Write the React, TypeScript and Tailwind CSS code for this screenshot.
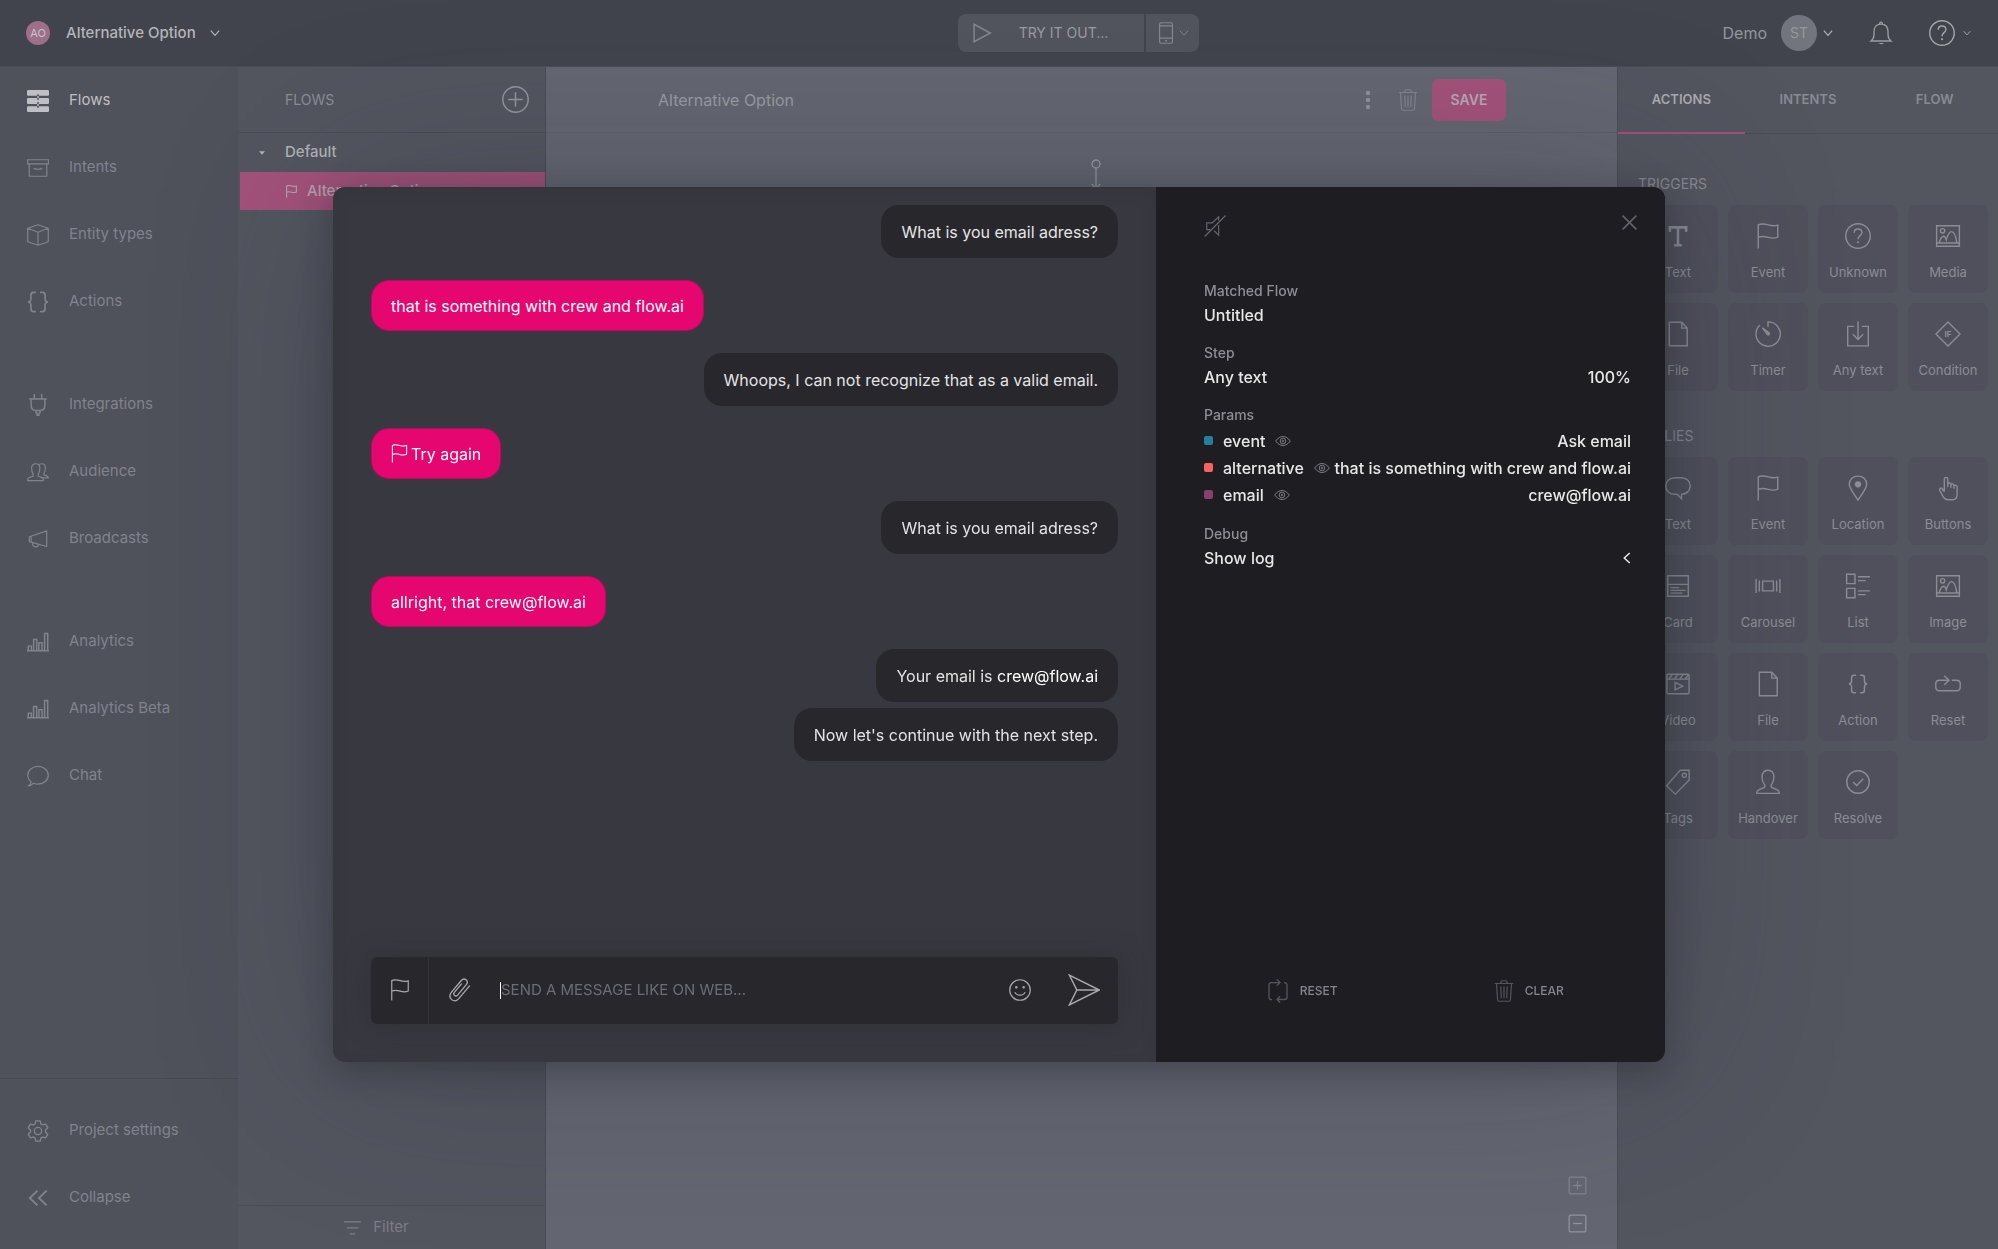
import type { ReactNode } from "react";

type IconProps = { className?: string; w?: number };

function Svg({ className = "size-6", w = 1.3, children }: IconProps & { children: ReactNode }) {
  return (
    <svg viewBox="0 0 24 24" className={`shrink-0 ${className}`} fill="none" stroke="currentColor" strokeWidth={w} aria-hidden="true">
      {children}
    </svg>
  );
}

const FlowsIcon = (p: IconProps) => (
  <Svg {...p}>
    <g fill="currentColor" stroke="none">
      <rect x="0" y="0" width="24" height="6.4" rx="1.4" />
      <rect x="0" y="8.8" width="24" height="6.4" rx="1.4" />
      <rect x="0" y="17.6" width="24" height="6.4" rx="1.4" />
      <rect x="11.2" y="5" width="1.6" height="15" />
    </g>
    <g fill="#50525c" stroke="none">
      <circle cx="12" cy="5.6" r="1.1" />
      <circle cx="12" cy="9.8" r="1.1" />
      <circle cx="12" cy="14.2" r="1.1" />
      <circle cx="12" cy="18.4" r="1.1" />
    </g>
  </Svg>
);
const ArchiveIcon = (p: IconProps) => (
  <Svg {...p}>
    <path d="M.7 3h22.6v4.6H.7zM2.4 7.6V21h19.2V7.6M7.6 12c.4 1.8 8.400 1.800 8.800 0" />
  </Svg>
);
const CubeIcon = (p: IconProps) => (
  <Svg {...p}>
    <path d="M12 .8 23.200 4.600v14.800L12 23.200.8 19.400V4.600zM.8 4.600 12 9l11.200-4.400M12 9v14.200" strokeLinejoin="round" />
  </Svg>
);
const BracesIcon = (p: IconProps) => (
  <Svg {...p} w={1.8}>
    <path d="M9 1.500H7.200C5.400 1.500 4.300 2.600 4.300 4.400v3.800C4.300 10.500 3.300 12 1 12c2.300 0 3.300 1.500 3.300 3.800v3.800c0 1.800 1.100 2.900 2.900 2.900H9M15 1.500h1.800c1.800 0 2.900 1.100 2.900 2.900v3.800c0 2.300 1 3.800 3.300 3.800-2.300 0-3.300 1.500-3.300 3.800v3.800c0 1.800-1.100 2.900-2.900 2.900H15" strokeLinecap="round" />
  </Svg>
);
const ActionTileIcon = ({ className }: IconProps) => (
  <span className={`grid place-items-center ${className}`}>
    <BracesIcon className="size-5" />
  </span>
);
const PlugIcon = (p: IconProps) => (
  <Svg {...p} w={1.6}>
    <path d="M8 0v5.500M16 0v5.500M2.500 5.500h19M4.500 5.500V12c0 3.500 2 6 5.200 6h4.600c3.200 0 5.200-2.500 5.200-6V5.500M9.700 18v2.200l1.300 1v2h2v-2l1.300-1V18" />
  </Svg>
);
const AudienceIcon = (p: IconProps) => (
  <Svg {...p}>
    <path d="M.7 21.500h17v-1.300c0-2-1.400-2.400-5.400-3.700v-2.400c1.400-1.700 1.700-4 1.700-6.500 0-3-1.800-4.600-4.500-4.600S5 4.600 5 7.600c0 2.500.3 4.800 1.700 6.500v2.400c-4 1.300-6 1.700-6 3.700zM12.800 4.400c.8-.9 2-1.400 3.300-1.400 2.500 0 4 1.600 4 4.300 0 2.200-.4 4.200-1.600 5.800v2c3.600 1 4.800 1.600 4.800 3.400h-5.800" />
  </Svg>
);
const HornIcon = (p: IconProps) => (
  <Svg {...p}>
    <path d="M2.500 9.500 21.500 3.200v17L2.500 14.800zM6 16.300c0 5.500 6 5.500 6.500 1.500M4.500 9v6" strokeLinejoin="round" />
  </Svg>
);
const ChartIcon = (p: IconProps) => (
  <Svg {...p} w={1.6}>
    <path d="M0 21.500h24M1.400 21.500v-5h3.400v5M7.200 21.500V9.300h3.400v12.200M13 21.500v-8.700h3.400v8.700M19.200 21.500V2.800h3.400v18.700" />
  </Svg>
);
const ChatIcon = (p: IconProps) => (
  <Svg {...p}>
    <path d="M4.600 18.300C2.200 16.500.8 14 .8 11.200.8 5.800 5.800 1.500 12 1.500s11.200 4.300 11.200 9.700S18.200 20.900 12 20.900c-1.800 0-3.500-.4-5-1-1.500 1.600-3.300 2.600-5.600 2.900 1.800-1.200 2.900-2.700 3.200-4.500z" strokeLinejoin="round" />
  </Svg>
);
const GearIcon = (p: IconProps) => (
  <Svg {...p} w={1.5}>
    <circle cx="12" cy="12" r="4" />
    <path d="M9.600 1h4.800l.7 3.300 1.900 1.100 3.300-1 2.400 4.100-2.500 2.300v2.400l2.500 2.300-2.400 4.100-3.300-1-1.900 1.100-.7 3.300H9.600l-.7-3.300L7 18.600l-3.300 1-2.400-4.100 2.500-2.300v-2.400L1.300 8.500l2.400-4.100 3.300 1 1.900-1.100z" strokeLinejoin="round" />
  </Svg>
);
const CollapseIcon = (p: IconProps) => (
  <Svg {...p} w={2}>
    <path d="m11.500 4-8.500 8 8.500 8M21.500 4 13 12l8.500 8" />
  </Svg>
);
const PlusCircle = (p: IconProps) => (
  <Svg {...p}>
    <circle cx="12" cy="12" r="11.300" />
    <path d="M12 5.500v13M5.500 12h13" />
  </Svg>
);
const Chevron = (p: IconProps) => (
  <Svg {...p}>
    <path d="m2 6.500 10 11 10-11" />
  </Svg>
);
const FlagIcon = (p: IconProps) => (
  <Svg {...p}>
    <path d="M3 23.500V1.800c3-1.600 6-1 9.300 0s5.700 1.200 8.700.2v11c-3 1.400-5.700 1.200-8.700.3s-6.300-1.500-9.300 0" />
  </Svg>
);
const FilterIcon = (p: IconProps) => (
  <Svg {...p}>
    <path d="M0 4h24M4 12.500h16M8 21h8" />
  </Svg>
);
const PlayIcon = (p: IconProps) => (
  <Svg {...p}>
    <path d="M2.500 1.500v21L22 12z" />
  </Svg>
);
const PhoneIcon = (p: IconProps) => (
  <Svg {...p}>
    <rect x="5" y=".8" width="14" height="22.400" rx="1.800" />
    <path d="M5 4.200h14M5 17.600h14" />
    <rect x="11" y="19.600" width="2" height="1.800" fill="currentColor" stroke="none" />
  </Svg>
);
const DotsIcon = (p: IconProps) => (
  <Svg {...p}>
    <g fill="currentColor" stroke="none">
      <circle cx="12" cy="3.500" r="2.700" />
      <circle cx="12" cy="12" r="2.700" />
      <circle cx="12" cy="20.500" r="2.700" />
    </g>
  </Svg>
);
const TrashIcon = (p: IconProps) => (
  <Svg {...p}>
    <path d="M2 3.800h20M8.500 3.800C8.500 1.800 9 .8 10.200.8h3.600c1.200 0 1.700 1 1.700 3M3.800 3.800l1.200 18c.1.900.6 1.400 1.500 1.400h11c.9 0 1.400-.5 1.500-1.400l1.200-18M8.500 7l.5 13M12 7v13M15.500 7l-.5 13" />
  </Svg>
);
const BellIcon = (p: IconProps) => (
  <Svg {...p}>
    <path d="M2 20h20c-2.300-1.800-3-3.200-3-6.500v-3C19 6 16.500 3.200 12 3.200S5 6 5 10.500v3c0 3.300-.7 4.700-3 6.500zM10.600 3.200c-.4-2.800 3.200-2.800 2.800 0" />
    <path d="M9.300 22h5.400c-.5 1.600-4.900 1.600-5.400 0z" fill="currentColor" stroke="none" />
  </Svg>
);
const HelpIcon = (p: IconProps) => (
  <Svg {...p}>
    <circle cx="12" cy="12" r="11.300" />
    <path d="M8.500 9C8.500 6.800 9.900 5.500 12 5.500s3.600 1.300 3.600 3.300c0 2.800-3.600 3-3.600 6.200" />
    <circle cx="12" cy="17.800" r="1" fill="currentColor" stroke="none" />
  </Svg>
);
const TextIcon = (p: IconProps) => (
  <Svg {...p}>
    <path d="M4.500 8V4h15v4M12 4v16.500M8.500 20.500h7" strokeWidth="2.400" />
  </Svg>
);
const ImageIcon = (p: IconProps) => (
  <Svg {...p}>
    <path d="M1.500 2.500h21v19h-21zM1.500 18.400h21M3.800 18.400c1-3.400 2.700-6.200 4.200-6.200s1.800 1.600 2.400 3.400c1.300-4.400 2.700-7.600 4.800-7.600 2.400 0 4.200 5.200 5 10.400" />
    <circle cx="7" cy="7.200" r="2" />
  </Svg>
);
const FileIcon = (p: IconProps) => (
  <Svg {...p}>
    <path d="M4 1.200h11.500l5 5.400v16.200H4zM15.500 1.200v5.400h5" />
  </Svg>
);
const TimerIcon = (p: IconProps) => (
  <Svg {...p}>
    <path d="M12 5.500V.8A11.200 11.200 0 1 1 4.600 3.700" />
    <path d="M6.800 6.300 13 10.800c1 1.200-.4 2.700-1.600 1.700z" fill="currentColor" />
  </Svg>
);
const AnyTextIcon = (p: IconProps) => (
  <Svg {...p}>
    <path d="M8.500 5h-6v18h19V5h-6M12 .5v16M7.300 12.200 12 17l4.700-4.800" />
  </Svg>
);
const ConditionIcon = () => (
  <span className="relative grid size-[26px] place-items-center">
    <Svg className="absolute inset-0 size-[26px]">
      <path d="M12 .9 23.100 12 12 23.100.9 12z" />
    </Svg>
    <span className="text-[8px] leading-none font-bold">IF</span>
  </span>
);
const BubbleIcon = (p: IconProps) => (
  <Svg {...p}>
    <path d="M9 2.500h6c4.800 0 8.300 3.300 8.300 7.700 0 4.300-3.300 7.500-8 7.600v4.200l-4-4.200H9C4.200 17.800.7 14.500.7 10.200S4.200 2.500 9 2.500z" />
  </Svg>
);
const PinIcon = (p: IconProps) => (
  <Svg {...p}>
    <path d="M12 23.200C8 17 4 12.600 4 8.600 4 4 7.600 1 12 1s8 3 8 7.600c0 4-4 8.400-8 14.600z" />
    <circle cx="12" cy="8.600" r="2.900" fill="currentColor" stroke="none" />
  </Svg>
);
const HandIcon = (p: IconProps) => (
  <Svg {...p}>
    <path d="M8.600 15V3.800c0-2.200 3.200-2.200 3.200 0V11M11.800 8.600c0-1.700 2.900-1.700 2.900.2v3M14.700 9.400c0-1.700 2.800-1.500 2.800.3v3M17.500 10.600c0-1.600 2.900-1.500 2.900.4v7c0 2.800-1.400 4.800-4.200 4.800H12c-2.400 0-3.600-1-4.600-3l-3-5.600c-.9-1.800 1.200-2.900 2.400-1.300L8.600 15.500" />
  </Svg>
);
const CardIcon = (p: IconProps) => (
  <Svg {...p}>
    <path d="M2.500 2.500h19v19h-19zM2.500 10.500h19M5 13.500h8M5 16h14M5 18.600h11" />
  </Svg>
);
const CarouselIcon = (p: IconProps) => (
  <Svg {...p}>
    <path d="M7 7.500h10v9H7zM1 5.500v13M4 7v10M23 5.500v13M20 7v10" />
  </Svg>
);
const ListIcon = (p: IconProps) => (
  <Svg {...p}>
    <path d="M1.500 1.200h7.700v8.600H1.500zM1.500 14.200h7.700v8.600H1.500zM12 3.500h11M12 7h7M12 16.500h11M12 20h7" />
  </Svg>
);
const VideoIcon = (p: IconProps) => (
  <Svg {...p}>
    <rect x="1.800" y="3" width="20.400" height="18" rx="1" />
    <path d="M1.800 7.500h20.400M3.500 7.500 7 3M8.500 7.500 12 3M13.500 7.500 17 3M18.500 7.500 22 3M9.300 10.500v7l7-3.500z" />
  </Svg>
);
const ResetTileIcon = (p: IconProps) => (
  <Svg {...p}>
    <path d="M15.500 8.500h4.300c2.200 0 3.500 1.200 3.500 3.300v3c0 2.200-1.300 3.500-3.500 3.500H4.200c-2.200 0-3.500-1.300-3.500-3.500v-3c0-2.100 1.300-3.300 3.500-3.300h8.600M8.500 4.300l4.500 4.200-4.500 4.200" />
  </Svg>
);
const TagIcon = (p: IconProps) => (
  <Svg {...p}>
    <path d="M14 1.200h8.300v9L9.500 23.200l-8-7.700z" />
    <circle cx="17.800" cy="5.800" r="1.900" />
  </Svg>
);
const PersonIcon = (p: IconProps) => (
  <Svg {...p}>
    <path d="M1.500 22.500h21c0-2.600-1.400-3.400-6.600-5.200-1.300-.5-1.400-2-.4-3.300 1.400-1.800 2-4 2-6.500 0-4-2.200-6.300-5.500-6.300S6.500 3.500 6.500 7.500c0 2.500.6 4.700 2 6.500 1 1.300.9 2.800-.4 3.300-5.200 1.800-6.600 2.600-6.600 5.200z" />
  </Svg>
);
const CheckCircle = (p: IconProps) => (
  <Svg {...p}>
    <circle cx="12" cy="12" r="10.400" />
    <path d="m7.500 12 3.300 3.300 6-6.300" />
  </Svg>
);
const MuteIcon = (p: IconProps) => (
  <Svg {...p}>
    <path d="M.8 23.500 23.500.5M7 16H3V8.500h6L16 2v4M16 11v11l-5-4.800" />
  </Svg>
);
const CloseIcon = (p: IconProps) => (
  <Svg {...p}>
    <path d="m1 1 22 22M23 1 1 23" />
  </Svg>
);
const EyeIcon = (p: IconProps) => (
  <Svg {...p} w={1.5}>
    <path d="M1 12c6.500-9 15.500-9 22 0-6.500 9-15.500 9-22 0z" />
    <circle cx="12" cy="12" r="4.200" />
    <circle cx="12" cy="12" r="1.200" />
  </Svg>
);
const ClipIcon = (p: IconProps) => (
  <Svg {...p}>
    <path d="M13.500 5.900 6.300 14.400c-1.700 2.400 1.300 4.900 3.300 2.700l8.700-10.400c2.900-3.800-1.900-7.700-5-4.200L3.300 14.400c-4.200 5.700 2.700 11.500 7.500 6.200L21.500 7.900" strokeLinecap="round" />
  </Svg>
);
const SmileIcon = (p: IconProps) => (
  <Svg {...p}>
    <circle cx="12" cy="12" r="11.200" />
    <path d="M6.500 14.300c1.800 4.400 9.200 4.400 11 0" />
    <circle cx="8" cy="9" r="1.300" fill="currentColor" stroke="none" />
    <circle cx="16" cy="9" r="1.300" fill="currentColor" stroke="none" />
  </Svg>
);
const SendIcon = (p: IconProps) => (
  <Svg {...p}>
    <path d="M1 .8 23.500 12 1 23.200 6.600 12zM6.600 12h16.900" />
  </Svg>
);
const CycleIcon = (p: IconProps) => (
  <Svg {...p}>
    <path d="M6 20.500H5c-1.300 0-2-.8-2-2V6c0-1.600.8-2.400 2.400-2.400H14M10.800.4 14 3.600l-3.200 3.200M18 3.600c2 0 3 .9 3 2.600v12c0 1.500-.9 2.300-2.500 2.300H11M14.200 17.300 11 20.500l3.200 3.200" />
  </Svg>
);
const BoxIcon = ({ plus }: { plus?: boolean }) => (
  <Svg className="size-[19px]" w={1.600}>
    <rect x="1.500" y="1.500" width="21" height="21" rx="1.800" />
    <path d={plus ? "M12 6.500v11M6.500 12h11" : "M6.500 12h11"} />
  </Svg>
);

type Item = { label: string; icon: (p: IconProps) => ReactNode };

const navGroups: Item[][] = [
  [
    { label: "Flows", icon: FlowsIcon },
    { label: "Intents", icon: ArchiveIcon },
    { label: "Entity types", icon: CubeIcon },
    { label: "Actions", icon: BracesIcon },
  ],
  [
    { label: "Integrations", icon: PlugIcon },
    { label: "Audience", icon: AudienceIcon },
    { label: "Broadcasts", icon: HornIcon },
  ],
  [
    { label: "Analytics", icon: ChartIcon },
    { label: "Analytics Beta", icon: ChartIcon },
    { label: "Chat", icon: ChatIcon },
  ],
];

const triggers: Item[] = [
  { label: "Text", icon: TextIcon },
  { label: "Event", icon: FlagIcon },
  { label: "Unknown", icon: HelpIcon },
  { label: "Media", icon: ImageIcon },
  { label: "File", icon: FileIcon },
  { label: "Timer", icon: TimerIcon },
  { label: "Any text", icon: AnyTextIcon },
  { label: "Condition", icon: ConditionIcon },
];

const replies: Item[] = [
  { label: "Text", icon: BubbleIcon },
  { label: "Event", icon: FlagIcon },
  { label: "Location", icon: PinIcon },
  { label: "Buttons", icon: HandIcon },
  { label: "Card", icon: CardIcon },
  { label: "Carousel", icon: CarouselIcon },
  { label: "List", icon: ListIcon },
  { label: "Image", icon: ImageIcon },
  { label: "Video", icon: VideoIcon },
  { label: "File", icon: FileIcon },
  { label: "Action", icon: ActionTileIcon },
  { label: "Reset", icon: ResetTileIcon },
  { label: "Tags", icon: TagIcon },
  { label: "Handover", icon: PersonIcon },
  { label: "Resolve", icon: CheckCircle },
];

function NavItem({ item, active }: { item: Item; active?: boolean }) {
  const Icon = item.icon;
  return (
    <a href="#" className={`flex h-[67px] items-center gap-5 pl-[27px] text-[15px] ${active ? "text-[#bfc0c3]" : "text-[#81838d]"}`}>
      <Icon className="size-[22px]" />
      {item.label}
    </a>
  );
}

function TopBar() {
  return (
    <header className="grid h-[67px] shrink-0 grid-cols-[1fr_auto_1fr] items-center border-b border-[#4b4c58] bg-[#42444d] text-[#b4b5b9]">
      <button className="flex items-center gap-4 justify-self-start pl-[26px] text-[15px] font-medium">
        <span className="grid size-6 place-items-center rounded-full bg-[#9d6f89] text-[11px] font-normal text-[#c9c3ca]">AO</span>
        <span className="flex items-center gap-[14px]">
          Alternative Option
          <Chevron className="size-[10px]" w={2.800} />
        </span>
      </button>
      <div className="ml-[158px] flex h-[38px] text-[#91939b]">
        <button className="flex w-[188px] items-center rounded-l-lg border-r-2 border-[#43454e] bg-[#52545e] pl-[14px] text-sm text-[#9b9ca2]">
          <PlayIcon className="size-[20px] text-[#858791]" w={1.800} />
          <span className="flex-1 pr-2">TRY IT OUT...</span>
        </button>
        <button aria-label="Device" className="flex w-[53px] items-center justify-center gap-[2px] rounded-r-lg bg-[#52545e] text-[#858791]">
          <PhoneIcon className="size-[22px]" />
          <Chevron className="size-[10px]" w={2.400} />
        </button>
      </div>
      <div className="flex items-center justify-self-end pr-[27px]">
        <span className="mr-[14px] text-base text-[#94959c]">Demo</span>
        <button className="flex items-center gap-[6px]">
          <span className="grid size-9 place-items-center rounded-full bg-[#72757d] text-sm text-[#96989f]">ST</span>
          <Chevron className="size-[10px]" w={2.800} />
        </button>
        <button aria-label="Notifications" className="ml-9 text-[#9c9da3]">
          <BellIcon className="size-6" />
        </button>
        <button aria-label="Help" className="ml-9 flex items-center gap-2 text-[#a5a6ab]">
          <HelpIcon className="size-[26px]" />
          <Chevron className="size-2" w={3} />
        </button>
      </div>
    </header>
  );
}

function Tile({ item }: { item: Item }) {
  const Icon = item.icon;
  return (
    <button className="flex h-[88px] flex-col items-center gap-[14px] rounded-lg bg-[#4d4f59]/75 pt-[18px] text-[13px] leading-[18px] text-[#8b8d95]">
      <Icon className="size-[26px]" />
      {item.label}
    </button>
  );
}

function Bubble({ user, children }: { user?: boolean; children: ReactNode }) {
  return (
    <div
      className={`flex items-center gap-[2px] rounded-[18px] text-base ${
        user
          ? "h-[51px] self-start border border-[#b80a5e] bg-[#e6066f] px-[19px] text-white"
          : "h-[53px] self-end bg-[#28282c] px-5 text-[#e4e4e6]"
      }`}
    >
      {children}
    </div>
  );
}

function Param({ color, name, value }: { color: string; name: string; value: string }) {
  return (
    <div className="flex h-[27px] items-center justify-between">
      <span className="flex items-center">
        <span className={`mr-[10px] size-[9px] rounded-xs ${color}`} />
        {name}
        <EyeIcon className="ml-[10px] size-4 text-[#7d7d84]" />
      </span>
      <span className="whitespace-nowrap">{value}</span>
    </div>
  );
}

function Dialog() {
  return (
    <div className="fixed inset-0 flex items-center justify-center">
      <section
        role="dialog"
        aria-label="Try it out"
        className="flex h-[70%] w-2/3 overflow-hidden rounded-xl bg-[#383840] shadow-[0_8px_32px_rgba(30,34,40,0.4),0_0_180px_rgba(40,44,52,0.3)]"
      >
        <div className="flex min-w-0 flex-1 flex-col px-[38px] pt-[18px] pb-[38px] shadow-[inset_0_6px_14px_rgba(48,52,50,0.3)]">
          <div className="flex flex-1 flex-col gap-[22px]">
            <Bubble>What is you email adress?</Bubble>
            <Bubble user>that is something with crew and flow.ai</Bubble>
            <Bubble>Whoops, I can not recognize that as a valid email.</Bubble>
            <Bubble user>
              <FlagIcon className="-ml-px size-[19px]" />
              Try again
            </Bubble>
            <Bubble>What is you email adress?</Bubble>
            <Bubble user>allright, that crew@flow.ai</Bubble>
            <div className="flex flex-col gap-[6px]">
              <Bubble>
                <span>
                  Your email is <span className="text-white">crew@flow.ai</span>
                </span>
              </Bubble>
              <Bubble>Now let's continue with the next step.</Bubble>
            </div>
          </div>
          <form className="flex h-[67px] items-center rounded-md bg-[#28282c] text-[#a9a9ad] shadow-[0_0_24px_rgba(40,40,44,0.5)]">
            <button type="button" aria-label="Send event" className="flex h-full w-[58px] items-center justify-center border-r border-[#33333a]">
              <FlagIcon className="size-[22px]" />
            </button>
            <button type="button" aria-label="Attach file" className="ml-[19px]">
              <ClipIcon className="size-6" />
            </button>
            <span className="ml-7 h-[17px] w-px bg-white" />
            <input
              aria-label="Message"
              placeholder="SEND A MESSAGE LIKE ON WEB..."
              className="min-w-0 flex-1 bg-transparent text-[15px] text-white caret-transparent outline-none placeholder:text-[#6c6d74]"
            />
            <button type="button" aria-label="Emoji">
              <SmileIcon className="size-[22px]" />
            </button>
            <button type="submit" aria-label="Send" className="mr-[18px] ml-[37px]">
              <SendIcon className="size-8" w={1.100} />
            </button>
          </form>
        </div>
        <aside className="flex w-[509px] shrink-0 flex-col bg-[#1e1d21] pr-[34px] pl-12 text-base font-medium text-[#e7e7e8]">
          <div className="flex items-start justify-between pt-7 text-[#64646d]">
            <button aria-label="Unmute">
              <MuteIcon className="size-[22px]" />
            </button>
            <button aria-label="Close" className="-mr-[6px]">
              <CloseIcon className="size-[15px]" w={2.400} />
            </button>
          </div>
          <div className="mt-[42px] flex flex-1 flex-col gap-[14px] leading-6">
            <div>
              <h3 className="text-sm leading-6 text-[#8e8e94]">Matched Flow</h3>
              <p>Untitled</p>
            </div>
            <div>
              <h3 className="text-sm leading-6 text-[#8e8e94]">Step</h3>
              <p className="flex justify-between">
                <span>Any text</span>
                <span>100%</span>
              </p>
            </div>
            <div>
              <h3 className="text-sm leading-6 text-[#8e8e94]">Params</h3>
              <Param color="bg-[#277da1]" name="event" value="Ask email" />
              <Param color="bg-[#f9615c]" name="alternative" value="that is something with crew and flow.ai" />
              <Param color="bg-[#8a3f6a]" name="email" value="crew@flow.ai" />
            </div>
            <div>
              <h3 className="text-sm leading-6 text-[#8e8e94]">Debug</h3>
              <button className="flex w-full items-center justify-between text-left">
                Show log
                <Chevron className="-mr-[2px] size-3 rotate-90" w={3} />
              </button>
            </div>
          </div>
          <div className="grid h-[142px] grid-cols-2 items-center text-[12px] text-[#85858c]">
            <button className="flex items-center justify-center gap-[10px] pr-[18px]">
              <CycleIcon className="size-6 text-[#55555e]" />
              RESET
            </button>
            <button className="flex items-center justify-center gap-[10px] pl-2">
              <TrashIcon className="size-[22px] text-[#55555e]" />
              CLEAR
            </button>
          </div>
        </aside>
      </section>
    </div>
  );
}

export default function App() {
  return (
    <div className="flex h-screen flex-col overflow-hidden bg-[#50525c] font-[Inter,sans-serif]">
      <TopBar />
      <div className="flex min-h-0 flex-1">
        <nav className="flex w-[238px] shrink-0 flex-col justify-between bg-[#4f515b]">
          <div className="flex flex-col gap-9">
            {navGroups.map((group, i) => (
              <div key={i}>
                {group.map((item) => (
                  <NavItem key={item.label} item={item} active={item.label === "Flows"} />
                ))}
              </div>
            ))}
          </div>
          <div className="border-t border-[#474953] py-[18px]">
            <NavItem item={{ label: "Project settings", icon: GearIcon }} />
            <NavItem item={{ label: "Collapse", icon: CollapseIcon }} />
          </div>
        </nav>

        <section className="flex w-[308px] shrink-0 flex-col border-r border-[#4b4c57] bg-[#53555f]">
          <div className="flex h-[66px] items-center justify-between border-b border-[#4a4c56] pr-4 pl-[47px]">
            <h2 className="text-sm text-[#8d8e96]">FLOWS</h2>
            <button aria-label="Add flow" className="text-[#95969d]">
              <PlusCircle className="size-[27px]" />
            </button>
          </div>
          <div className="flex flex-1 flex-col pl-[2px]">
            <button className="flex h-[39px] items-center gap-[18px] pl-[19px] text-[15px] font-medium text-[#b2b3b7]">
              <svg viewBox="0 0 10 6" className="mr-[2px] h-1 w-[6px]" fill="currentColor" aria-hidden="true">
                <path d="M0 0h10L5 6z" />
              </svg>
              Default
            </button>
            <a href="#" className="flex h-[38px] items-center gap-[9px] bg-[#a4527b] pl-[45px] text-[15px] font-medium text-[#b7a5b3]">
              <FlagIcon className="size-[13px]" w={2} />
              Alternative Option
            </a>
          </div>
          <button className="flex h-[44px] items-center justify-center gap-3 border-t border-[#4a4c56] pr-[30px] text-[15px] text-[#7c7e88]">
            <FilterIcon className="size-[17px]" w={2} />
            Filter
          </button>
        </section>

        <main className="relative flex min-w-0 flex-1 flex-col bg-[#646671]">
          <div className="flex h-[66px] shrink-0 items-center justify-between border-b border-[#5c5e69] pr-[111px] pl-28">
            <h1 className="text-base text-[#9a9ba2]">Alternative Option</h1>
            <div className="flex items-center text-[#91929a]">
              <button aria-label="More">
                <DotsIcon className="size-5" />
              </button>
              <button aria-label="Delete" className="mr-[13px] ml-[19px] text-[#84868f]">
                <TrashIcon className="size-[22px]" />
              </button>
              <button className="h-[42px] w-[74px] rounded-md bg-[#a4527b] text-sm font-semibold text-[#b7a9b5]">SAVE</button>
            </div>
          </div>
          <svg viewBox="0 0 12 30" className="absolute top-[92px] left-1/2 ml-2 h-[30px] w-3" fill="none" stroke="#9c9da4" strokeWidth="1.300" aria-hidden="true">
            <circle cx="6" cy="5" r="4" />
            <path d="M6 9v20M2 25l4 5 4-5" />
          </svg>
          <div className="absolute right-[30px] bottom-4 flex flex-col gap-[19px]">
            <button aria-label="Zoom in" className="text-[#82848d]">
              <BoxIcon plus />
            </button>
            <button aria-label="Zoom out" className="text-[#94959d]">
              <BoxIcon />
            </button>
          </div>
        </main>

        <aside className="w-[381px] shrink-0 border-l border-[#4b4c57] bg-[#53555f]">
          <div role="tablist" className="grid h-[67px] grid-cols-3 border-b border-[#4a4c56] text-[13px] font-semibold text-[#898a93]">
            <button role="tab" aria-selected="true" className="-mb-px border-b-2 border-[#a84d7a] text-[#a9aaaf]">
              ACTIONS
            </button>
            <button role="tab" aria-selected="false">INTENTS</button>
            <button role="tab" aria-selected="false">FLOW</button>
          </div>
          <div className="flex flex-col gap-[35px] pt-10 pr-[10px] pl-5">
            {[
              { title: "TRIGGERS", items: triggers },
              { title: "REPLIES", items: replies },
            ].map((g) => (
              <section key={g.title}>
                <h2 className="text-sm leading-5 text-[#898a93]">{g.title}</h2>
                <div className="mt-[11px] grid grid-cols-4 gap-[10px]">
                  {g.items.map((item) => (
                    <Tile key={item.label} item={item} />
                  ))}
                </div>
              </section>
            ))}
          </div>
        </aside>
      </div>
      <Dialog />
    </div>
  );
}
